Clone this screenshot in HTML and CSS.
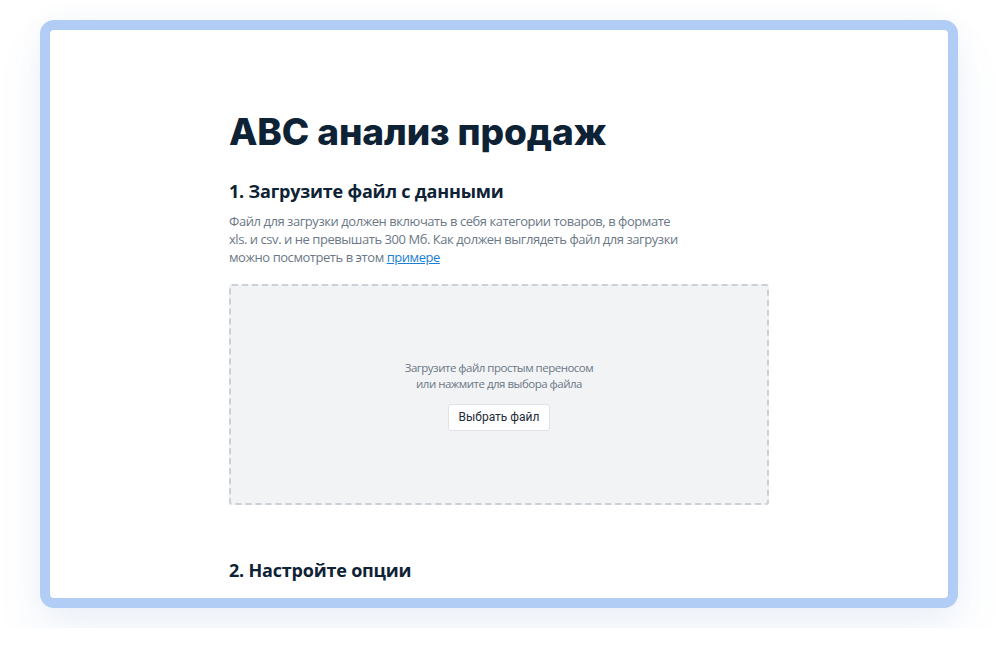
FILE: index.html
```html
<!DOCTYPE html>
<html lang="ru">
<head>
<meta charset="utf-8">
<title>ABC анализ продаж</title>
<link rel="stylesheet" href="styles.css">
</head>
<body>
<div class="frame">
  <main class="content">
    <h1 class="title">ABC анализ продаж</h1>
    <h2 class="section-title">1. Загрузите файл с данными</h2>
    <p class="description">Файл для загрузки должен включать в себя категории товаров, в формате xls. и csv. и не превышать 300 Мб. Как должен выглядеть файл для загрузки можно посмотреть в этом <a class="link" href="#">примере</a></p>
    <div class="dropzone">
      <p class="dropzone-text">Загрузите файл простым переносом<br>или нажмите для выбора файла</p>
      <button class="btn" type="button">Выбрать файл</button>
    </div>
    <h2 class="section-title section-two">2. Настройте опции</h2>
  </main>
</div>
</body>
</html>
```

FILE: styles.css
```css
* { box-sizing: border-box; }
html, body { margin: 0; padding: 0; background: #ffffff; }
body {
  padding: 20px 40px;
  font-family: "Open Sans", "Noto Sans", sans-serif;
}
.frame {
  width: 918px;
  height: 588px;
  border: 10px solid #b1cdf5;
  border-radius: 14px;
  background: #ffffff;
  overflow: hidden;
  box-shadow: 0 28px 48px rgba(70, 110, 190, 0.08), 0 0 24px rgba(70, 110, 190, 0.05);
}
.content {
  width: 540px;
  margin: 0 auto;
  padding-top: 80px;
}
.title {
  margin: 0;
  font-family: Inter, "Liberation Sans", sans-serif;
  font-weight: 800;
  font-size: 37px;
  line-height: 44px;
  letter-spacing: -0.1px;
  color: #0e2235;
}
.section-title {
  margin: 24px 0 0;
  font-family: "Open Sans", "Noto Sans", sans-serif;
  font-weight: 700;
  font-size: 18px;
  line-height: 26px;
  letter-spacing: -0.2px;
  color: #0e2235;
}
.description {
  margin: 8px 0 0;
  width: 452px;
  font-size: 13px;
  line-height: 18px;
  letter-spacing: -0.45px;
  color: #6b7886;
}
.link { color: #1a7fd4; text-decoration: underline; }
.dropzone {
  margin-top: 18px;
  height: 221px;
  border: 2px dashed #c9d0d7;
  border-radius: 3px;
  background: #f2f3f5;
  display: flex;
  flex-direction: column;
  align-items: center;
  justify-content: center;
  padding-top: 1px;
}
.dropzone-text {
  margin: 0;
  text-align: center;
  font-size: 11.5px;
  line-height: 16px;
  letter-spacing: -0.5px;
  color: #6b7886;
}
.btn {
  margin-top: 12px;
  height: 27px;
  padding: 0 10px;
  background: #ffffff;
  border: 1px solid #dfe3e7;
  border-radius: 3px;
  font-family: Roboto, Inter, sans-serif;
  font-size: 12px;
  color: #1d2b38;
}
.section-two { margin-top: 52px; }
```
